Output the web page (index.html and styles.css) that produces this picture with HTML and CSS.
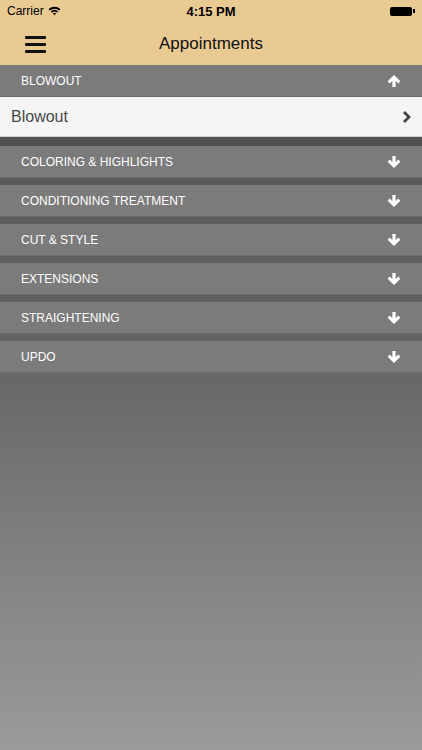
FILE: index.html
```html
<!DOCTYPE html>
<html lang="en">
<head>
    <meta charset="UTF-8">
    <meta name="viewport" content="width=device-width, initial-scale=1.0">
    <title>Appointments</title>
    <link rel="stylesheet" href="styles.css">
</head>
<body>
    <div class="topbar">
        <div class="status">
            <div class="carrier">Carrier
                <svg width="13" height="10" viewBox="0 0 13 10"><path d="M0.5 3.2 A8.5 8.5 0 0 1 12.5 3.2 L11.1 4.6 A6.5 6.5 0 0 0 1.9 4.6 Z M2.7 5.4 A5.4 5.4 0 0 1 10.3 5.4 L8.9 6.8 A3.4 3.4 0 0 0 4.1 6.8 Z M4.9 7.6 A2.3 2.3 0 0 1 8.1 7.6 L6.5 9.3 Z" fill="#000"/></svg>
            </div>
            <div class="time">4:15 PM</div>
            <div class="battery"><span class="cell"></span><span class="tip"></span></div>
        </div>
        <div class="navbar">
            <div class="menu">
                <span></span><span></span><span></span>
            </div>
            <div class="title">Appointments</div>
        </div>
    </div>

    <div class="list">
        <div class="section open">
            <div class="header">
                <span>BLOWOUT</span>
                <svg class="arrow" width="14" height="12" viewBox="0 0 14 12"><path d="M5.4 12 H8.6 V5.8 L11.2 8.4 L13.4 6.2 L7 0 L0.6 6.2 L2.8 8.4 L5.4 5.8 Z" fill="#fff"/></svg>
            </div>
            <div class="item">
                <span>Blowout</span>
                <svg width="10" height="14" viewBox="0 0 10 14"><path d="M2 2 L7 7 L2 12" fill="none" stroke="#444" stroke-width="2.8"/></svg>
            </div>
        </div>
        <div class="section">
            <div class="header"><span>COLORING &amp; HIGHLIGHTS</span>
                <svg class="arrow" width="14" height="12" viewBox="0 0 14 12"><path d="M5.4 0 H8.6 V6.2 L11.2 3.6 L13.4 5.8 L7 12 L0.6 5.8 L2.8 3.6 L5.4 6.2 Z" fill="#fff"/></svg></div>
        </div>
        <div class="section">
            <div class="header"><span>CONDITIONING TREATMENT</span>
                <svg class="arrow" width="14" height="12" viewBox="0 0 14 12"><path d="M5.4 0 H8.6 V6.2 L11.2 3.6 L13.4 5.8 L7 12 L0.6 5.8 L2.8 3.6 L5.4 6.2 Z" fill="#fff"/></svg></div>
        </div>
        <div class="section">
            <div class="header"><span>CUT &amp; STYLE</span>
                <svg class="arrow" width="14" height="12" viewBox="0 0 14 12"><path d="M5.4 0 H8.6 V6.2 L11.2 3.6 L13.4 5.8 L7 12 L0.6 5.8 L2.8 3.6 L5.4 6.2 Z" fill="#fff"/></svg></div>
        </div>
        <div class="section">
            <div class="header"><span>EXTENSIONS</span>
                <svg class="arrow" width="14" height="12" viewBox="0 0 14 12"><path d="M5.4 0 H8.6 V6.2 L11.2 3.6 L13.4 5.8 L7 12 L0.6 5.8 L2.8 3.6 L5.4 6.2 Z" fill="#fff"/></svg></div>
        </div>
        <div class="section">
            <div class="header"><span>STRAIGHTENING</span>
                <svg class="arrow" width="14" height="12" viewBox="0 0 14 12"><path d="M5.4 0 H8.6 V6.2 L11.2 3.6 L13.4 5.8 L7 12 L0.6 5.8 L2.8 3.6 L5.4 6.2 Z" fill="#fff"/></svg></div>
        </div>
        <div class="section last">
            <div class="header"><span>UPDO</span>
                <svg class="arrow" width="14" height="12" viewBox="0 0 14 12"><path d="M5.4 0 H8.6 V6.2 L11.2 3.6 L13.4 5.8 L7 12 L0.6 5.8 L2.8 3.6 L5.4 6.2 Z" fill="#fff"/></svg></div>
        </div>
    </div>
</body>
</html>
```

FILE: styles.css
```css
html, body {
    height: 100%;
}
body {
    margin: 0;
    font-family: "Liberation Sans", Arial, sans-serif;
    background: linear-gradient(#5c5c5c 0, #686868 380px, #9b9b9b 100%);
    overflow: hidden;
}
.topbar {
    background: #e9ca93;
    height: 65px;
}
.status {
    height: 22px;
    display: flex;
    align-items: center;
    justify-content: space-between;
    padding: 0 7px;
    font-size: 12px;
    color: #000;
}
.carrier {
    display: flex;
    align-items: center;
    gap: 4px;
    width: 80px;
}
.time {
    font-weight: bold;
    font-size: 13px;
}
.battery {
    width: 80px;
    display: flex;
    justify-content: flex-end;
    align-items: center;
}
.cell {
    width: 22px;
    height: 9px;
    background: #000;
    border-radius: 2px;
}
.tip {
    width: 2px;
    height: 4px;
    background: #000;
    margin-left: 1px;
}
.navbar {
    height: 43px;
    display: flex;
    align-items: center;
    position: relative;
}
.menu {
    display: flex;
    flex-direction: column;
    gap: 4px;
    margin-left: 25px;
    margin-top: 1px;
}
.menu span {
    display: block;
    width: 21px;
    height: 3px;
    background: #111;
    border-radius: 1px;
}
.title {
    position: absolute;
    left: 0;
    right: 0;
    text-align: center;
    font-size: 17px;
    color: #111;
    pointer-events: none;
}
.list {
    display: flex;
    flex-direction: column;
    background: linear-gradient(#555, #646464);
}
.section {
    border-bottom: 7px solid transparent;
}
.section.open {
    border-bottom: 9px solid #505050;
}
.section.last {
    border-bottom: 0;
}
.header {
    height: 32px;
    background: #7b7b7b;
    display: flex;
    align-items: center;
    justify-content: space-between;
    padding: 0 21px 0 21px;
    color: #fff;
    font-size: 12px;
    box-shadow: inset 0 -1px 0 rgba(0, 0, 0, 0.12);
}
.item {
    height: 40px;
    background: #f5f5f5;
    display: flex;
    align-items: center;
    justify-content: space-between;
    padding: 0 10px 0 11px;
    font-size: 16px;
    color: #484848;
    border-bottom: 1px solid #d0d0d0;
    box-sizing: border-box;
}
```
